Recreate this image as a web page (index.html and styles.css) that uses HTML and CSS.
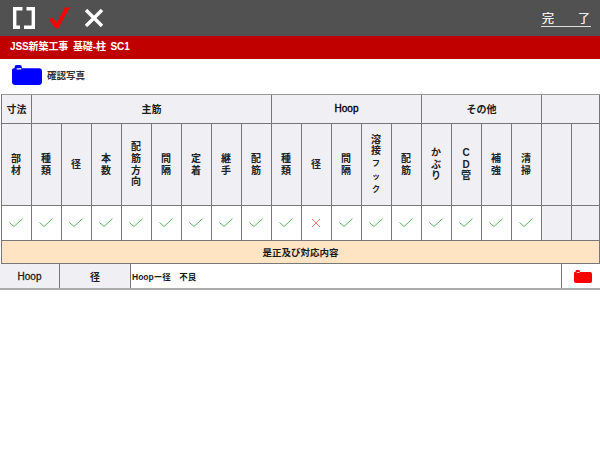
FILE: index.html
```html
<!DOCTYPE html>
<html lang="ja">
<head>
<meta charset="utf-8">
<title>確認写真</title>
<link rel="stylesheet" href="styles.css">
</head>
<body>
<svg class="defs" width="0" height="0" aria-hidden="true">
  <symbol id="ok" viewBox="0 0 14 10"><path d="M.5 4.500 5 8.500 13.500 .7" fill="none" stroke="#5cb85c" stroke-width="1"/></symbol>
  <symbol id="ng" viewBox="0 0 14 10"><path d="M3 1 11 9M11 1 3 9" fill="none" stroke="#ee8079" stroke-width="1"/></symbol>
  <symbol id="folder" viewBox="0 0 29 19"><path fill-rule="evenodd" d="M4.500 0h3a2 2 0 0 1 2 2v1h16.500a3 3 0 0 1 3 3v10a3 3 0 0 1-3 3H3a3 3 0 0 1-3-3V5c0-1.500.8-2 2.500-2V2a2 2 0 0 1 2-2zM4.500 3v1.200h4.500v-1.200z"/></symbol>
</svg>
<header class="topbar">
  <div class="tools">
    <svg class="ico-frame" width="22" height="22" viewBox="0 0 22 22"><path d="M9.500 1.700H1.700V20.300H7M13.500 1.700H20.300V20.300H11" fill="none" stroke="#fff" stroke-width="3.400"/></svg>
    <svg class="ico-check" width="21" height="22" viewBox="0 0 21 22"><path d="M0 12.500 3 10.500 8 15.500 16 .5H20.800L9 21.500H6.500z" fill="#f00"/></svg>
    <svg class="ico-close" width="18" height="18" viewBox="0 0 18 18"><path d="M1 1 17 17M17 1 1 17" fill="none" stroke="#fff" stroke-width="3.400"/></svg>
  </div>
  <div class="done"><span>完</span><span>了</span></div>
</header>
<div class="titlebar">JSS新築工事 基礎-柱 SC1</div>
<div class="photo-row">
  <svg class="folder-blue" width="30" height="20" viewBox="0 0 29 19" preserveAspectRatio="none"><use href="#folder"/></svg>
  <span>確認写真</span>
</div>
<section class="sheet">
  <div class="cell head">寸法</div>
  <div class="cell head span8">主筋</div>
  <div class="cell head span5 head-latin">Hoop</div>
  <div class="cell head span4">その他</div>
  <div class="cell head span2"></div>

  <div class="cell vert"><span>部<br>材</span></div>
  <div class="cell vert"><span>種<br>類</span></div>
  <div class="cell vert"><span>径</span></div>
  <div class="cell vert"><span>本<br>数</span></div>
  <div class="cell vert"><span>配<br>筋<br>方<br>向</span></div>
  <div class="cell vert"><span>間<br>隔</span></div>
  <div class="cell vert"><span>定<br>着</span></div>
  <div class="cell vert"><span>継<br>手</span></div>
  <div class="cell vert"><span>配<br>筋</span></div>
  <div class="cell vert"><span>種<br>類</span></div>
  <div class="cell vert"><span>径</span></div>
  <div class="cell vert"><span>間<br>隔</span></div>
  <div class="cell vert"><span>溶<br>接<br><small>フ</small><br><small>ッ</small><br><small>ク</small></span></div>
  <div class="cell vert"><span>配<br>筋</span></div>
  <div class="cell vert"><span>か<br>ぶ<br>り</span></div>
  <div class="cell vert"><span>C<br>D<br>管</span></div>
  <div class="cell vert"><span>補<br>強</span></div>
  <div class="cell vert"><span>清<br>掃</span></div>
  <div class="cell vert"></div>
  <div class="cell vert"></div>

  <div class="cell mark"><svg width="14" height="10"><use href="#ok"/></svg></div>
  <div class="cell mark"><svg width="14" height="10"><use href="#ok"/></svg></div>
  <div class="cell mark"><svg width="14" height="10"><use href="#ok"/></svg></div>
  <div class="cell mark"><svg width="14" height="10"><use href="#ok"/></svg></div>
  <div class="cell mark"><svg width="14" height="10"><use href="#ok"/></svg></div>
  <div class="cell mark"><svg width="14" height="10"><use href="#ok"/></svg></div>
  <div class="cell mark"><svg width="14" height="10"><use href="#ok"/></svg></div>
  <div class="cell mark"><svg width="14" height="10"><use href="#ok"/></svg></div>
  <div class="cell mark"><svg width="14" height="10"><use href="#ok"/></svg></div>
  <div class="cell mark"><svg width="14" height="10"><use href="#ok"/></svg></div>
  <div class="cell mark"><svg width="14" height="10"><use href="#ng"/></svg></div>
  <div class="cell mark"><svg width="14" height="10"><use href="#ok"/></svg></div>
  <div class="cell mark"><svg width="14" height="10"><use href="#ok"/></svg></div>
  <div class="cell mark"><svg width="14" height="10"><use href="#ok"/></svg></div>
  <div class="cell mark"><svg width="14" height="10"><use href="#ok"/></svg></div>
  <div class="cell mark"><svg width="14" height="10"><use href="#ok"/></svg></div>
  <div class="cell mark"><svg width="14" height="10"><use href="#ok"/></svg></div>
  <div class="cell mark"><svg width="14" height="10"><use href="#ok"/></svg></div>
  <div class="cell mark-empty"></div>
  <div class="cell mark-empty"></div>

  <div class="cell remedy">是正及び対応内容</div>
</section>
<section class="detail">
  <div class="d-head d-latin">Hoop</div>
  <div class="d-head d-strong">径</div>
  <div class="d-text">Hoopー径　不良</div>
  <div class="d-photo"><svg class="folder-red" width="18" height="13" viewBox="0 0 29 19" preserveAspectRatio="none"><use href="#folder"/></svg></div>
</section>
</body>
</html>
```
FILE: styles.css
```css
* { box-sizing: border-box; }
html, body { margin: 0; padding: 0; }
body {
  width: 600px;
  height: 450px;
  overflow: hidden;
  background: #fff;
  color: #1c1c1c;
  font-family: "Liberation Sans", "Noto Sans CJK JP", sans-serif;
  font-size: 10px;
}
.defs { position: absolute; }
.topbar {
  height: 36px;
  background: #515151;
  display: flex;
  justify-content: space-between;
  align-items: flex-start;
  padding: 7px 9px 0 13px;
}
.tools { display: flex; align-items: flex-start; }
.ico-check { margin-left: 14px; }
.ico-close { margin: 2px 0 0 15px; }
.done {
  width: 50px;
  height: 15px;
  margin-top: 5px;
  padding: 0 1px;
  display: flex;
  justify-content: space-between;
  border-bottom: 1px solid #ddd;
  color: #fff;
  font-size: 12px;
  line-height: 14px;
  -webkit-text-stroke: 0.2px #fff;
}
.titlebar {
  height: 23px;
  background: #c00000;
  color: #fff;
  padding-left: 10px;
  font-size: 10px;
  letter-spacing: -0.1px;
  word-spacing: 2px;
  font-weight: 700;
  line-height: 22px;
  white-space: pre;
}
.photo-row {
  height: 35px;
  padding: 6px 0 0 12px;
  display: flex;
  align-items: flex-start;
  gap: 5px;
  font-weight: 700;
  font-size: 9.500px;
  line-height: 22px;
  color: #333;
}
.folder-blue { fill: #0000ff; }
.folder-red { fill: #ff0000; display: block; }
.sheet {
  margin-left: 1px;
  width: 599px;
  display: grid;
  grid-template-columns: repeat(19, 30px) 28px;
  grid-template-rows: 29px 82px 35px 23px;
  border-left: 1px solid #777;
  border-top: 1px solid #999;
  background: #fff;
}
.cell {
  border-right: 1px solid #777;
  border-bottom: 1px solid #777;
  display: flex;
  align-items: center;
  justify-content: center;
  text-align: center;
}
.head, .vert, .mark-empty { background: #efeff4; }
.head { font-weight: 700; font-size: 10px; padding-bottom: 1px; }
.head-latin { font-weight: 400; -webkit-text-stroke: 0.35px #000; color: #000; }
.span8 { grid-column: span 8; }
.span5 { grid-column: span 5; }
.span4 { grid-column: span 4; }
.span2 { grid-column: span 2; }
.vert { line-height: 11.700px; font-weight: 700; color: #222; padding-right: 1px; }
.vert small { font-size: 8px; }
.mark { padding-right: 1px; }
.mark svg { display: block; }
.remedy {
  grid-column: 1 / -1;
  background: #ffe4c4;
  font-weight: 700;
  font-size: 9.500px;
}
.detail {
  display: grid;
  grid-template-columns: 60px 71px 1fr 38px;
  height: 26px;
  border-bottom: 2px solid #aaa;
}
.detail > div {
  display: flex;
  align-items: center;
  border-right: 1px solid #777;
}
.detail > div:last-child { border-right: 0; }
.d-head {
  background: #efeff4;
  justify-content: center;
  font-size: 10px;
}
.d-latin { -webkit-text-stroke: 0.3px #1c1c1c; }
.d-strong { font-weight: 700; }
.d-text {
  padding-left: 1px;
  font-size: 8.500px;
  font-weight: 700;
}
.d-photo { padding: 0 0 0 12px; }
```
